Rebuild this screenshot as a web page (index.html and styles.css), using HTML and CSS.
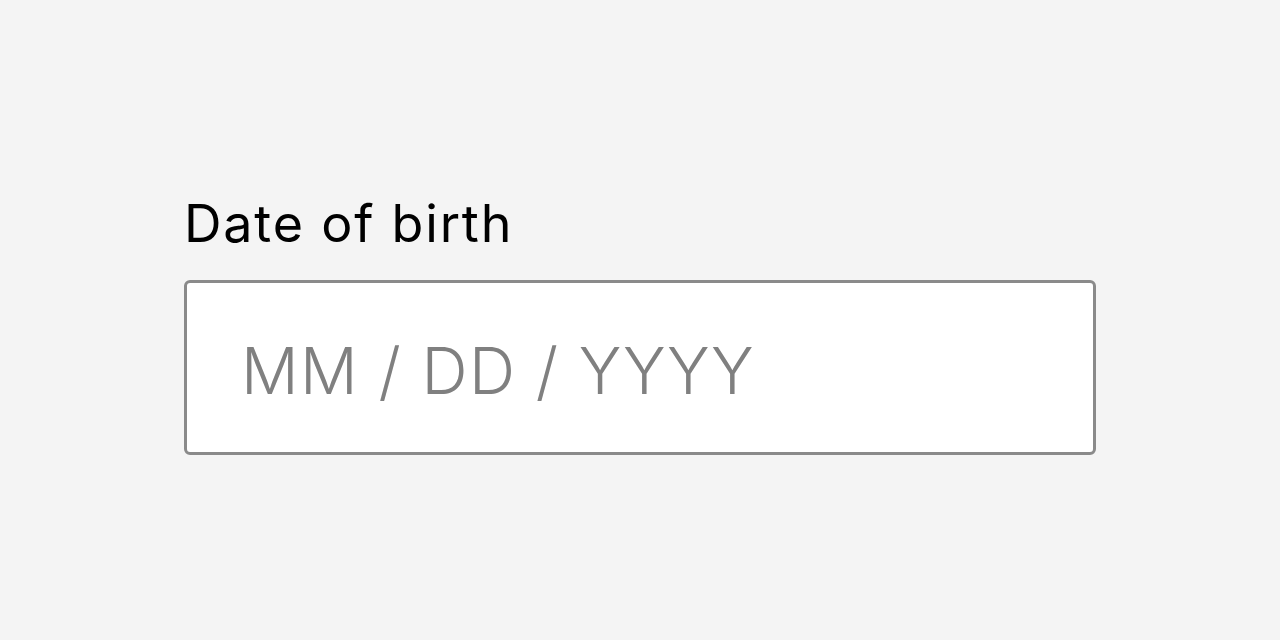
FILE: index.html
```html
<!DOCTYPE html>
<html lang="en">
<head>
<meta charset="utf-8">
<title>Date of birth</title>
<link rel="stylesheet" href="styles.css">
</head>
<body>
<main class="page">
  <div class="field">
    <label class="field-label" for="dob">Date of birth</label>
    <input class="field-input" id="dob" type="text" placeholder="MM / DD / YYYY">
  </div>
</main>
</body>
</html>
```
FILE: styles.css
```css
html, body {
  margin: 0;
  padding: 0;
  background: #f4f4f4;
}
.page {
  width: 1280px;
  height: 640px;
  display: flex;
  justify-content: center;
  box-sizing: border-box;
  padding-top: 192px;
}
.field {
  width: 912px;
  display: flex;
  flex-direction: column;
  gap: 24px;
}
.field-label {
  font-family: "Inter", sans-serif;
  font-size: 52px;
  line-height: 64px;
  color: #000;
  letter-spacing: 1.8px;
}
.field-input {
  box-sizing: border-box;
  width: 912px;
  height: 175px;
  border: 3px solid #8a8a8a;
  border-radius: 6px;
  background: #fff;
  padding: 6px 0 0 54px;
  font-family: "Inter", sans-serif;
  font-size: 64px;
  font-weight: 300;
  letter-spacing: 1.4px;
  color: #808080;
  outline: none;
}
.field-input::placeholder {
  color: #808080;
  opacity: 1;
}
```
